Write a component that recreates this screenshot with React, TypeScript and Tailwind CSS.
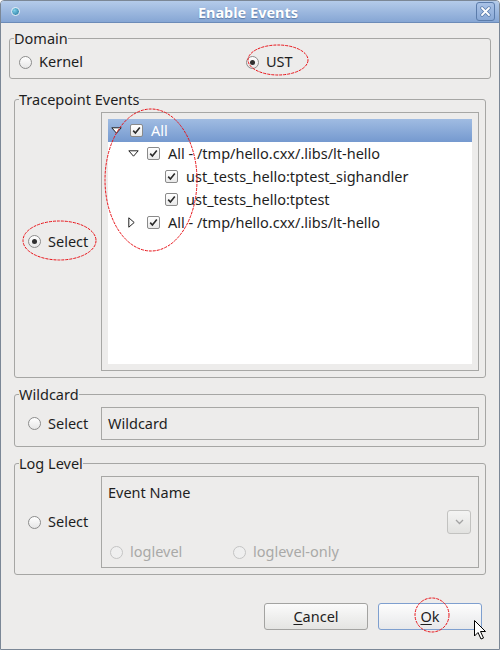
import React from "react";

const FONT = "[font-family:'Noto_Sans','Open_Sans',sans-serif]";

function Radio({ checked = false, disabled = false }: { checked?: boolean; disabled?: boolean }) {
  return (
    <span
      className={`flex h-[13px] w-[13px] shrink-0 items-center justify-center rounded-full border ${
        disabled
          ? "border-[#c4c4c4] bg-[#efefef]"
          : "border-[#8c8c8c] bg-gradient-to-b from-[#ffffff] to-[#e6e6e6]"
      }`}
    >
      {checked && <span className="h-[5px] w-[5px] rounded-full bg-[#2f2f2f]" />}
    </span>
  );
}

function Check() {
  return (
    <span className="flex h-[13px] w-[13px] shrink-0 items-center justify-center rounded-[2px] border border-[#8a8a8a] bg-gradient-to-b from-[#ffffff] to-[#e9e9e9]">
      <svg width="9" height="9" viewBox="0 0 9 9">
        <path d="M1.2 4.6 L3.4 7 L7.8 1.5" fill="none" stroke="#2b2b2b" strokeWidth="1.6" />
      </svg>
    </span>
  );
}

function Expander({ open }: { open?: boolean }) {
  if (open === undefined) return null;
  return open ? (
    <svg width="11" height="7" viewBox="0 0 11 7">
      <path d="M0.8 0.8 H10.2 L5.5 6.2 Z" fill="#fff" stroke="#222" strokeWidth="1" />
    </svg>
  ) : (
    <svg width="7" height="11" viewBox="0 0 7 11">
      <path d="M0.8 0.8 V10.2 L6.2 5.5 Z" fill="#fff" stroke="#222" strokeWidth="1" />
    </svg>
  );
}

const rows: { indent: string; open?: boolean; text: string }[] = [
  { indent: "pl-[2px]", open: true, text: "All" },
  { indent: "pl-[19px]", open: true, text: "All - /tmp/hello.cxx/.libs/lt-hello" },
  { indent: "pl-[37px]", text: "ust_tests_hello:tptest_sighandler" },
  { indent: "pl-[37px]", text: "ust_tests_hello:tptest" },
  { indent: "pl-[19px]", open: false, text: "All - /tmp/hello.cxx/.libs/lt-hello" },
];

function Group({
  title,
  className,
  children,
}: {
  title: string;
  className: string;
  children: React.ReactNode;
}) {
  return (
    <fieldset className={`rounded-[3px] border border-[#a6a6a4] ${className}`}>
      <legend className="ml-[4px] h-[16px] px-0 text-[14.5px] leading-[16px] text-[#1e1e1e]">
        {title}
      </legend>
      {children}
    </fieldset>
  );
}

export default function App() {
  return (
    <div
      className={`relative flex h-[650px] w-[500px] flex-col overflow-hidden rounded-t-[4px] border border-[#7b8796] bg-[#edeceb] text-[14.5px] text-[#1e1e1e] ${FONT}`}
    >
      {/* title bar */}
      <div className="relative flex h-[22px] shrink-0 items-center border-b border-[#6c8bb8] bg-gradient-to-b from-[#b4cbea] to-[#86a6d4]">
        <span className="ml-[10px] h-[9px] w-[9px] rounded-full border border-[#e8f0f8] bg-[radial-gradient(circle_at_35%_35%,#7fd0e8,#1f6f9a)]" />
        <span className="flex-1 text-center text-[14.5px] font-bold leading-[16px] text-white [text-shadow:0_1px_1px_#5c7aa6]">
          Enable Events
        </span>
        <span className="mr-[4px] flex h-[19px] w-[19px] items-center justify-center rounded-[3px] border border-[#5b7cab] bg-gradient-to-b from-[#a9c2e6] to-[#8aa9d6]">
          <svg width="11" height="11" viewBox="0 0 11 11">
            <path d="M2 2 L9 9 M9 2 L2 9" stroke="#5b7cab" strokeWidth="3.4" strokeLinecap="round" />
            <path d="M2 2 L9 9 M9 2 L2 9" stroke="#fff" strokeWidth="1.8" strokeLinecap="round" />
          </svg>
        </span>
      </div>

      {/* body */}
      <div className="flex flex-1 flex-col px-[8px] pt-[7px]">
        <Group title="Domain" className="px-0">
          <div className="my-[7px] flex h-[18px] items-center">
            <label className="flex w-[236px] items-center gap-[7px] pl-[9px]">
              <Radio />
              <span>Kernel</span>
            </label>
            <label className="flex items-center gap-[7px]">
              <Radio checked />
              <span>UST</span>
            </label>
          </div>
        </Group>

        <Group title="Tracepoint Events" className="mx-[5px] mt-[12px] pb-[6px] pr-[6px] pt-[5px]">
          <div className="flex items-center">
            <label className="flex w-[86px] items-center gap-[7px] pl-[13px]">
              <Radio checked />
              <span>Select</span>
            </label>
            <div className="h-[259px] flex-1 border border-[#a7a7a5] p-[6px]">
              <div className="h-full bg-white">
                {rows.map((r, i) => (
                  <div
                    key={i}
                    className={`flex h-[23px] items-center ${r.indent} ${
                      i === 0 ? "bg-gradient-to-b from-[#a0bce2] to-[#7599cf] text-white" : ""
                    }`}
                  >
                    <span className="flex w-[20px] shrink-0 items-center pl-[1px]">
                      <Expander open={r.open} />
                    </span>
                    <Check />
                    <span className="ml-[8px] whitespace-nowrap">{r.text}</span>
                  </div>
                ))}
              </div>
            </div>
          </div>
        </Group>

        <Group title="Wildcard" className="mx-[5px] mt-[8px] pb-[6px] pr-[6px] pt-[5px]">
          <div className="flex items-center">
            <label className="flex w-[86px] items-center gap-[7px] pl-[13px]">
              <Radio />
              <span>Select</span>
            </label>
            <div className="flex h-[33px] flex-1 items-center border border-[#a7a7a5] pl-[6px]">
              Wildcard
            </div>
          </div>
        </Group>

        <Group title="Log Level" className="mx-[5px] mt-[8px] pb-[6px] pr-[6px] pt-[5px]">
          <div className="flex items-center">
            <label className="flex w-[86px] items-center gap-[7px] pl-[13px]">
              <Radio />
              <span>Select</span>
            </label>
            <div className="flex h-[92px] flex-1 flex-col border border-[#a7a7a5] pl-[6px] pr-[7px] pt-[7px]">
              <div className="h-[16px] leading-[16px]">Event Name</div>
              <div className="mt-[10px] flex h-[24px] justify-end">
                <span className="flex h-[24px] w-[24px] items-center justify-center rounded-[3px] border border-[#c2c2c0] bg-gradient-to-b from-[#f4f4f3] to-[#e2e2e0]">
                  <svg width="9" height="6" viewBox="0 0 9 6">
                    <path d="M1 1 L4.5 4.5 L8 1" fill="none" stroke="#a3a3a3" strokeWidth="1.3" />
                  </svg>
                </span>
              </div>
              <div className="mt-[10px] flex h-[16px] items-center pl-[2px] text-[#a9a9a7]">
                <span className="flex w-[123px] items-center gap-[7px]">
                  <Radio disabled />
                  <span>loglevel</span>
                </span>
                <span className="flex items-center gap-[7px]">
                  <Radio disabled />
                  <span>loglevel-only</span>
                </span>
              </div>
            </div>
          </div>
        </Group>

        <div className="mt-[28px] flex justify-end gap-[10px] pr-[9px]">
          <button className="flex h-[27px] w-[104px] items-center justify-center rounded-[3px] border border-[#a3a3a1] bg-gradient-to-b from-[#fbfbfb] to-[#e4e4e2]">
            <span>
              <span className="underline underline-offset-2">C</span>ancel
            </span>
          </button>
          <button className="flex h-[27px] w-[104px] items-center justify-center rounded-[3px] border border-[#7e9fcf] bg-gradient-to-b from-[#fdfdfd] to-[#e7e8ea]">
            <span>
              <span className="underline underline-offset-2">O</span>k
            </span>
          </button>
        </div>
      </div>

      {/* annotations + cursor overlay */}
      <svg className="pointer-events-none absolute left-[-1px] top-[-1px]" width="500" height="650">
        <g fill="none" stroke="#e8141a" strokeWidth="1" strokeDasharray="3 1">
          <ellipse cx="278" cy="60" rx="30" ry="15" />
          <ellipse cx="151" cy="180" rx="46" ry="71" />
          <ellipse cx="59.5" cy="240.5" rx="36.5" ry="19.5" />
          <ellipse cx="432" cy="615" rx="17" ry="17" />
        </g>
        <path
          d="M474.5 620.5 L474.5 636 L478 632.5 L481 639 L483.5 638 L480.5 631.5 L485.5 631.5 Z"
          fill="#fff"
          stroke="#000"
          strokeWidth="1"
          strokeLinejoin="round"
        />
      </svg>
    </div>
  );
}
